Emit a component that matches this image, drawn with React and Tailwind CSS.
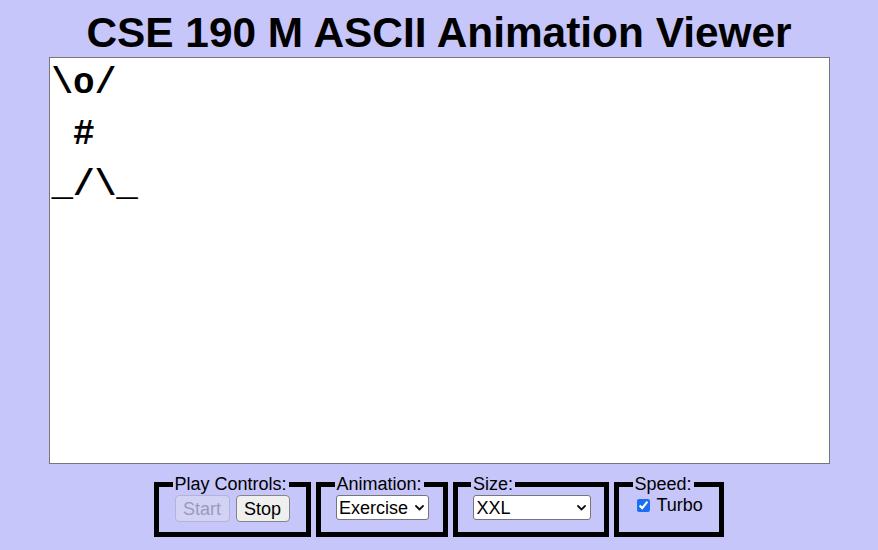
import { useState } from "react";

const frame = "\\o/\n #\n_/\\_";

const Chevron = () => (
  <svg
    className="pointer-events-none absolute top-1/2 right-[5px] -translate-y-1/2"
    width="9"
    height="6"
    viewBox="0 0 9 6"
    fill="none"
  >
    <path d="M1 1l3.5 3.5L8 1" stroke="#111" strokeWidth="1.8" strokeLinecap="round" strokeLinejoin="round" />
  </svg>
);

const Box = ({ title, children, className = "" }) => (
  <fieldset className={`border-[5px] border-black px-[13.5px] pb-[10px] ${className}`}>
    <legend className="px-[2px] text-[18px] leading-[21px]">{title}</legend>
    {children}
  </fieldset>
);

const App = () => {
  const [text, setText] = useState(frame);
  const [anim, setAnim] = useState("exercise");
  const [size, setSize] = useState("xxl");
  const [turbo, setTurbo] = useState(true);

  return (
    <div className="min-h-screen bg-[#c6c6fa] font-['Liberation_Sans',Arial,sans-serif] text-black">
      {/* Title */}
      <h1 className="pt-[9px] text-center text-[42.4px] leading-[48px] font-bold">
        CSE 190 M ASCII Animation Viewer
      </h1>

      {/* Animation area */}
      <div className="flex justify-center">
        <textarea
          value={text}
          onChange={(e) => setText(e.target.value)}
          spellCheck={false}
          className="block h-[407px] w-[781px] resize-none border border-[#767676] bg-white px-[2px] pt-0 font-['Liberation_Mono','Courier_New',monospace] text-[36px] leading-[51px] font-bold outline-none"
        />
      </div>

      {/* Controls */}
      <div className="mt-[10px] flex items-stretch justify-center gap-[5px]">
        <Box title="Play Controls:" className="w-[157px]">
          <div className="flex gap-[6px] px-[2px]">
            <button
              disabled
              className="h-[27px] w-[55px] rounded-[4px] border border-[#b3b3d6] bg-[#d2d2f4] text-[18px] leading-none text-[#9b9bbd]"
            >
              Start
            </button>
            <button className="h-[27px] w-[54px] rounded-[4px] border border-[#858585] bg-[#efefef] text-[18px] leading-none">
              Stop
            </button>
          </div>
        </Box>

        <Box title="Animation:" className="w-[130px]">
          <div className="relative ml-[1.5px] w-[93px]">
            <select
              value={anim}
              onChange={(e) => setAnim(e.target.value)}
              className="block h-[25px] w-full appearance-none rounded-[3px] border border-[#767676] bg-white pl-[2px] text-[18px] leading-none"
            >
              <option value="blank">Blank</option>
              <option value="custom">Custom</option>
              <option value="exercise">Exercise</option>
              <option value="juggler">Juggler</option>
              <option value="bike">Bike</option>
              <option value="dive">Dive</option>
            </select>
            <Chevron />
          </div>
        </Box>

        <Box title="Size:" className="w-[156px]">
          <div className="relative ml-[1.5px] w-[118px]">
            <select
              value={size}
              onChange={(e) => setSize(e.target.value)}
              className="block h-[25px] w-full appearance-none rounded-[3px] border border-[#767676] bg-white pl-[3px] text-[18px] leading-none"
            >
              <option value="tiny">Tiny</option>
              <option value="small">Small</option>
              <option value="medium">Medium</option>
              <option value="large">Large</option>
              <option value="xl">Extra Large</option>
              <option value="xxl">XXL</option>
            </select>
            <Chevron />
          </div>
        </Box>

        <Box title="Speed:" className="w-[110px]">
          <label className="flex h-[21px] items-center pl-[4px] text-[18px]">
            <input
              type="checkbox"
              checked={turbo}
              onChange={(e) => setTurbo(e.target.checked)}
              className="m-0 h-[13px] w-[13px] accent-[#1b6ef3]"
            />
            <span className="ml-[7px]">Turbo</span>
          </label>
        </Box>
      </div>
    </div>
  );
};

export default App;
